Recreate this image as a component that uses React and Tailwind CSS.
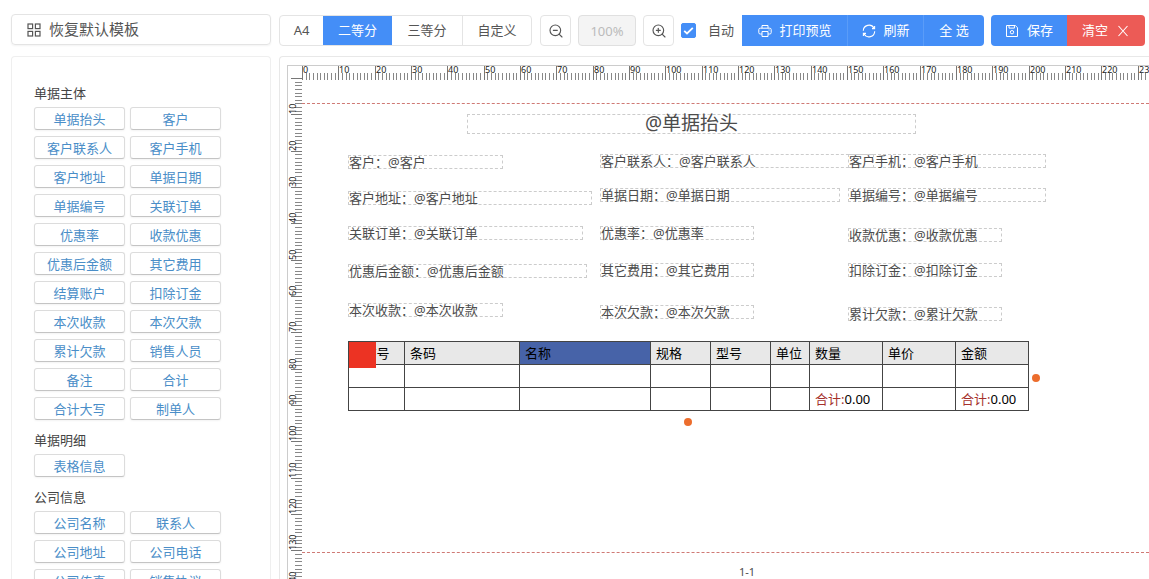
import React from "react";
import clsx from "clsx";
import { ZoomIn, ZoomOut } from "lucide-react";

const PX_PER_MM = 3.634;
const PAPER_WIDTH = 241;
const PAPER_HEIGHT = 140;

const groups = [
  {
    title: "单据主体",
    items: [
      "单据抬头", "客户", "客户联系人", "客户手机", "客户地址", "单据日期",
      "单据编号", "关联订单", "优惠率", "收款优惠", "优惠后金额", "其它费用",
      "结算账户", "扣除订金", "本次收款", "本次欠款", "累计欠款", "销售人员",
      "备注", "合计", "合计大写", "制单人",
    ],
  },
  { title: "单据明细", items: ["表格信息"] },
  {
    title: "公司信息",
    items: ["公司名称", "联系人", "公司地址", "公司电话", "公司传真", "销售协议"],
  },
];

// place of every text field on the paper
const fields = [
  { name: "客户", box: "left-[46px] top-[75px] w-[155px]" },
  { name: "客户地址", box: "left-[46px] top-[111px] w-[244px]" },
  { name: "关联订单", box: "left-[46px] top-[146px] w-[235px]" },
  { name: "优惠后金额", box: "left-[46px] top-[184px] w-[239px]" },
  { name: "本次收款", box: "left-[46px] top-[223px] w-[155px]" },
  { name: "客户联系人", box: "left-[298px] top-[74px] w-[274px]" },
  { name: "单据日期", box: "left-[298px] top-[108px] w-[240px]" },
  { name: "优惠率", box: "left-[298px] top-[146px] w-[154px]" },
  { name: "其它费用", box: "left-[298px] top-[183px] w-[154px]" },
  { name: "本次欠款", box: "left-[298px] top-[225px] w-[154px]" },
  { name: "客户手机", box: "left-[546px] top-[74px] w-[198px]" },
  { name: "单据编号", box: "left-[546px] top-[108px] w-[198px]" },
  { name: "收款优惠", box: "left-[546px] top-[148px] w-[154px]" },
  { name: "扣除订金", box: "left-[546px] top-[183px] w-[154px]" },
  { name: "累计欠款", box: "left-[546px] top-[227px] w-[154px]" },
];

const columns = [
  { name: "序号", width: "w-[56px]", align: "text-center" },
  { name: "条码", width: "w-[115px]" },
  { name: "名称", width: "w-[131px]", selected: true },
  { name: "规格", width: "w-[60px]" },
  { name: "型号", width: "w-[60px]" },
  { name: "单位", width: "w-[39px]" },
  { name: "数量", width: "w-[73px]", total: "0.00" },
  { name: "单价", width: "w-[73px]" },
  { name: "金额", width: "w-[73px]", total: "0.00" },
];

function GridIcon() {
  return (
    <svg className="w-[14px] h-[14px]" viewBox="0 0 14 14" fill="none" stroke="currentColor" strokeWidth="1.2">
      <rect x="1" y="1" width="4.6" height="4.6" />
      <rect x="8.4" y="1" width="4.6" height="4.6" />
      <rect x="1" y="8.4" width="4.6" height="4.6" />
      <rect x="8.4" y="8.4" width="4.6" height="4.6" />
    </svg>
  );
}

function PrintIcon() {
  return (
    <svg className="w-[14px] h-[14px]" viewBox="0 0 14 14" fill="none" stroke="currentColor" strokeWidth="1">
      <path d="M4 4.2V1.5h6v2.7" />
      <path d="M4 10H2.2a1.4 1.4 0 0 1-1.4-1.4v-3a1.4 1.4 0 0 1 1.4-1.4h9.6a1.4 1.4 0 0 1 1.4 1.4v3A1.4 1.4 0 0 1 11.8 10H10" />
      <path d="M4 7.5h6v5H4z" />
      <path d="M10.6 6h1" />
    </svg>
  );
}

function RefreshIcon() {
  return (
    <svg className="w-[14px] h-[14px]" viewBox="0 0 14 14" fill="none" stroke="currentColor" strokeWidth="1.1">
      <path d="M1.3 6.8A5.7 5.7 0 0 1 12 4.2" />
      <path d="M12.7 7.2A5.7 5.7 0 0 1 2 9.8" />
      <path d="M12.6 1.9v2.7H10" />
      <path d="M1.4 12.1V9.4H4" />
    </svg>
  );
}

function SaveIcon() {
  return (
    <svg className="w-[14px] h-[14px]" viewBox="0 0 14 14" fill="none" stroke="currentColor" strokeWidth="1">
      <path d="M1.5 1.5h8.8l2.2 2.2v8.8h-11z" />
      <path d="M4 1.5v2.6h5.4V1.5" />
      <circle cx="7" cy="8.2" r="1.7" />
    </svg>
  );
}

function CloseIcon() {
  return (
    <svg className="w-[14px] h-[14px]" viewBox="0 0 14 14" fill="none" stroke="currentColor" strokeWidth="1.1">
      <path d="M2.5 2l9 10M11.5 2l-9 10" />
    </svg>
  );
}

function HorizontalRuler() {
  const marks = Array.from({ length: PAPER_WIDTH }, (_, i) => i);
  return (
    <svg className="block w-full h-[14px] shrink-0 overflow-visible">
      {marks.map((mm) => {
        const x = Math.round(mm * PX_PER_MM);
        const major = mm % 10 === 0;
        return (
          <g key={mm}>
            <rect x={x} y={major ? 0 : 7} width="1" height={major ? 14 : 7} fill={major ? "#777" : "#888"} />
            {major && mm < PAPER_WIDTH - 1 && (
              <text x={x + 1} y="7" fontSize="9" fill="#222">
                {mm}
              </text>
            )}
          </g>
        );
      })}
    </svg>
  );
}

function VerticalRuler() {
  const marks = Array.from({ length: PAPER_HEIGHT + 1 }, (_, i) => i);
  return (
    <svg className="block w-[14px] h-full shrink-0 overflow-visible">
      {marks.map((mm) => {
        const y = Math.round(mm * PX_PER_MM) + 12;
        const major = mm % 10 === 0;
        return (
          <g key={mm}>
            <rect x={major ? 3 : 7} y={y} width={major ? 11 : 7} height="1" fill={major ? "#777" : "#888"} />
            {major && mm > 0 && (
              <text transform={`translate(8 ${y}) rotate(-90)`} fontSize="9" fill="#222">
                {mm}
              </text>
            )}
          </g>
        );
      })}
    </svg>
  );
}

function Sidebar() {
  return (
    <aside className="flex flex-col gap-[11px] w-[260px] shrink-0">
      <button className="flex items-center gap-2 h-[31px] shrink-0 px-[15px] border border-[#e4e4e4] rounded shadow-xs text-[15px] text-[#555]">
        <GridIcon />
        恢复默认模板
      </button>
      <div className="flex flex-col gap-[10px] flex-1 min-h-0 overflow-hidden pt-[26px] px-[22px] border border-b-0 border-[#efefef] rounded-t">
        {groups.map((group) => (
          <section key={group.title} className="shrink-0">
            <h3 className="mb-1 leading-5 text-[#444]">{group.title}</h3>
            <div className="grid grid-cols-[91px_91px] gap-x-[5px] gap-y-[6px]">
              {group.items.map((item) => (
                <button
                  key={item}
                  className="h-[23px] leading-5 border border-[#dcdcdc] border-b-[#c4c4c4] rounded-[3px] shadow-xs text-[#4a8ec8]"
                >
                  {item}
                </button>
              ))}
            </div>
          </section>
        ))}
      </div>
    </aside>
  );
}

function Toolbar() {
  return (
    <div className="flex items-center gap-[7px] h-[31px] mt-px shrink-0 text-[#555]">
      <div className="flex h-[31px] mr-px border border-[#e4e4e4] rounded overflow-hidden shrink-0">
        <button className="w-[43px]">A4</button>
        <button className="w-[69px] bg-[#448ef7] text-white">二等分</button>
        <button className="w-[70px]">三等分</button>
        <button className="w-[69px] border-l border-[#e4e4e4]">自定义</button>
      </div>
      <button aria-label="缩小" className="flex items-center justify-center w-[31px] h-[31px] shrink-0 border border-[#e4e4e4] rounded">
        <ZoomOut size={16} strokeWidth={1.7} />
      </button>
      <input
        aria-label="缩放比例"
        className="w-[58px] h-[31px] shrink-0 border border-[#e0e0e0] rounded bg-[#f4f4f4] text-center text-[#bbb]"
        defaultValue="100%"
        disabled
      />
      <button aria-label="放大" className="flex items-center justify-center w-[31px] h-[31px] shrink-0 border border-[#e4e4e4] rounded">
        <ZoomIn size={16} strokeWidth={1.7} />
      </button>
      <label className="flex items-center gap-3 mr-px shrink-0">
        <span className="relative flex">
          <input
            type="checkbox"
            defaultChecked
            className="peer appearance-none w-[15px] h-[15px] rounded-xs border border-[#448ef7] checked:bg-[#448ef7]"
          />
          <svg
            className="absolute inset-0 w-[15px] h-[15px] pointer-events-none hidden peer-checked:block"
            viewBox="0 0 15 15"
            fill="none"
            stroke="white"
            strokeWidth="1.8"
          >
            <path d="M3.2 7.8l2.8 2.7 5.8-5.6" />
          </svg>
        </span>
        自动
      </label>
      <div className="flex h-[31px] shrink-0 rounded-r overflow-hidden text-white">
        <button className="flex items-center justify-center gap-2 w-[105px] bg-[#448ef7]">
          <PrintIcon />
          打印预览
        </button>
        <button className="flex items-center justify-center gap-2 w-[76px] bg-[#448ef7] border-l border-[#5a9cf8]">
          <RefreshIcon />
          刷新
        </button>
        <button className="w-[61px] bg-[#448ef7] border-l border-[#5a9cf8]">全 选</button>
      </div>
      <div className="flex h-[31px] shrink-0 rounded overflow-hidden text-white">
        <button className="flex items-center justify-center gap-2 w-[76px] bg-[#448ef7]">
          <SaveIcon />
          保存
        </button>
        <button className="flex items-center justify-center gap-2 w-[78px] bg-[#ec5b56]">
          清空
          <CloseIcon />
        </button>
      </div>
    </div>
  );
}

function DetailTable() {
  return (
    <table className="table-fixed w-[680px] border-collapse text-black">
      <thead>
        <tr className="h-[23px] bg-[#e8e8e8]">
          {columns.map((col) => (
            <th
              key={col.name}
              className={clsx(
                "p-0 border border-[#444] font-normal leading-5",
                col.width,
                col.align ?? "text-left pl-[5px]",
                col.selected && "bg-[#4763a8]"
              )}
            >
              {col.name}
            </th>
          ))}
        </tr>
      </thead>
      <tbody>
        <tr className="h-[23px]">
          {columns.map((col) => (
            <td key={col.name} className="p-0 border border-[#444]" />
          ))}
        </tr>
        <tr className="h-[23px]">
          {columns.map((col) => (
            <td key={col.name} className="p-0 pl-[5px] border border-[#444] leading-5">
              {col.total && (
                <>
                  <span className="text-[#a5302c]">合计:</span>
                  {col.total}
                </>
              )}
            </td>
          ))}
        </tr>
      </tbody>
    </table>
  );
}

function Paper() {
  return (
    <div className="relative flex-1 min-h-0 text-[#4c4c4c]">
      <div className="absolute inset-x-0 top-[23px] border-t border-dashed border-[#cf7a75]" />
      <div className="absolute left-[165px] top-[34px] w-[449px] h-5 border border-dashed border-[#ccc] text-center text-[19px] leading-4">
        @单据抬头
      </div>
      {fields.map((field) => (
        <div
          key={field.name}
          className={clsx("absolute h-[14px] border border-dashed border-[#ccc] leading-3 whitespace-nowrap", field.box)}
        >
          {field.name}：@{field.name}
        </div>
      ))}
      <div className="absolute left-[46px] top-[261px]">
        <DetailTable />
        <div className="absolute left-px top-px w-[27px] h-[26px] bg-[#ec3323]" />
      </div>
      <span className="absolute left-[730px] top-[294px] w-2 h-2 rounded-full bg-[#ec6d2d]" />
      <span className="absolute left-[382px] top-[338px] w-2 h-2 rounded-full bg-[#ec6d2d]" />
      <div className="absolute inset-x-0 top-[472px] border-t border-dashed border-[#cf7a75]" />
      <span className="absolute left-[437px] top-[484px] text-[11px] leading-4">1-1</span>
    </div>
  );
}

function App() {
  return (
    <div className="flex gap-2 h-screen pt-[14px] pl-[11px] overflow-hidden bg-white font-['Noto_Sans','Noto_Sans_CJK_SC',sans-serif] text-[13px]">
      <Sidebar />
      <main className="flex flex-col gap-[10px] flex-1 min-w-0">
        <Toolbar />
        <div className="flex flex-1 min-h-0 pt-2 pl-[7px] border-t border-l border-[#e8e8e8] rounded-tl">
          <div className="flex flex-1 min-w-0 overflow-hidden border-t border-l border-[#ccc]">
            <VerticalRuler />
            <div className="flex flex-col flex-1 min-w-0">
              <HorizontalRuler />
              <Paper />
            </div>
          </div>
        </div>
      </main>
    </div>
  );
}

export default App;
